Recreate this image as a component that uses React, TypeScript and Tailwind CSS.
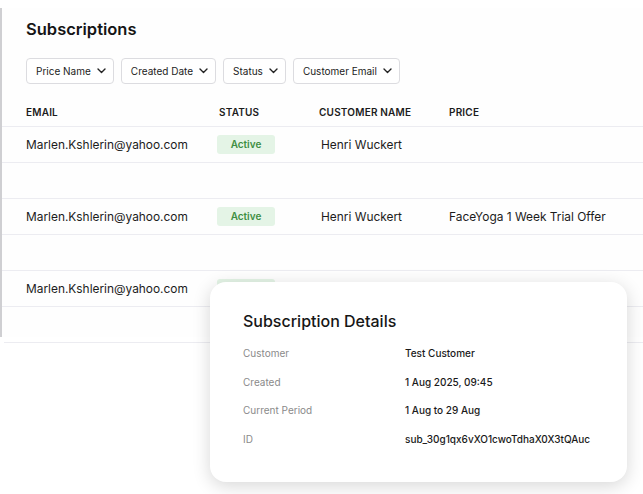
import React from "react";

const font = { fontFamily: "Inter, 'Noto Sans', sans-serif" };

function Chevron() {
  return (
    <svg width="9" height="6" viewBox="0 0 9 6" fill="none" stroke="#222" strokeWidth="1.4" strokeLinecap="round" strokeLinejoin="round">
      <path d="M1 1l3.5 3.5L8 1" />
    </svg>
  );
}

function Filter({ label }: { label: string }) {
  return (
    <div className="h-[26px] flex items-center gap-[6px] pl-[9px] pr-[7px] border border-[#dcdce0] rounded-[4px] text-[10px] text-[#222] bg-white">
      <span>{label}</span>
      <Chevron />
    </div>
  );
}

function Row({ price }: { price?: string }) {
  return (
    <div className="h-[36px] flex items-center border-b border-[#ececf1] text-[11.9px] text-[#1c1c1c]">
      <div className="w-[215px] shrink-0 pl-[24px]">Marlen.Kshlerin@yahoo.com</div>
      <div className="w-[102px] shrink-0">
        <span className="inline-flex items-center justify-center w-[58px] h-[19px] rounded-[3px] bg-[#e4f4e6] text-[#3f8f43] text-[10px] font-semibold">Active</span>
      </div>
      <div className="w-[130px] shrink-0 pl-[2px]">Henri Wuckert</div>
      <div className="flex-1 whitespace-nowrap">{price}</div>
    </div>
  );
}

function Empty() {
  return <div className="h-[36px] border-b border-[#ececf1]" />;
}

function Detail({ label, value }: { label: string; value: string }) {
  return (
    <div className="flex items-center h-[28.7px] text-[10px]">
      <div className="w-[162px] shrink-0 text-[#8a8a8a]">{label}</div>
      <div className="text-[#1a1a1a] font-medium">{value}</div>
    </div>
  );
}

export default function App() {
  return (
    <div style={font} className="relative w-[643px] h-[494px] bg-white overflow-hidden">
      <div className="mt-[8px] border-l-2 border-[#cfcfd2] bg-[#fefefe]">
        <div className="pt-[11px] pl-[24px]">
          <h1 className="text-[16.5px] leading-[20px] font-semibold text-[#151515]">Subscriptions</h1>
          <div className="mt-[19px] flex gap-[7px]">
            <Filter label="Price Name" />
            <Filter label="Created Date" />
            <Filter label="Status" />
            <Filter label="Customer Email" />
          </div>
        </div>
        <div className="mt-[14px] h-[29px] flex items-center border-b border-[#ececf1] text-[10px] font-semibold tracking-[0.02em] text-[#1c1c1c]">
          <div className="w-[217px] shrink-0 pl-[24px]">EMAIL</div>
          <div className="w-[100px] shrink-0">STATUS</div>
          <div className="w-[130px] shrink-0">CUSTOMER NAME</div>
          <div className="flex-1">PRICE</div>
        </div>
        <Row />
        <Empty />
        <Row price="FaceYoga 1 Week Trial Offer" />
        <Empty />
        <Row />
        <div className="h-[30px]" />
      </div>
      <div className="ml-[4px] h-[6px] border-b border-[#ececf1]" />

      <div className="absolute left-[210px] top-[282px] w-[417px] h-[200px] bg-white rounded-[16px] shadow-[0_4px_18px_rgba(0,0,0,0.16)] pl-[33px] pt-[29px]">
        <h2 className="text-[16px] leading-[20px] font-medium text-[#161616]">Subscription Details</h2>
        <div className="mt-[8px]">
          <Detail label="Customer" value="Test Customer" />
          <Detail label="Created" value="1 Aug 2025, 09:45" />
          <Detail label="Current Period" value="1 Aug to 29 Aug" />
          <Detail label="ID" value="sub_30g1qx6vXO1cwoTdhaX0X3tQAuc" />
        </div>
      </div>
    </div>
  );
}
